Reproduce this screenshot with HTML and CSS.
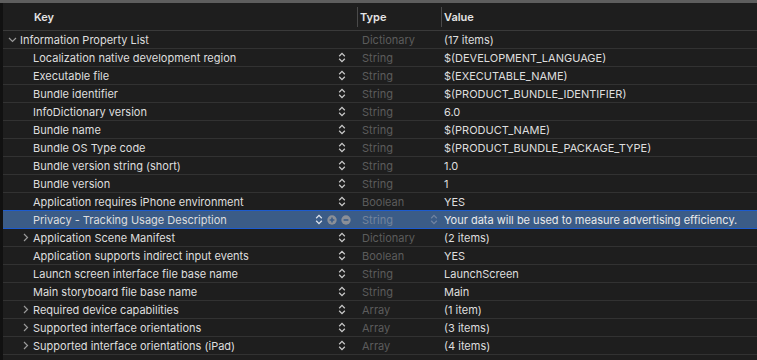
FILE: index.html
```html
<!DOCTYPE html>
<html>
<head>
<meta charset="utf-8">
<link rel="stylesheet" href="styles.css">
</head>
<body>
<div class="window">
  <div class="topstrip"></div>
  <div class="table">
    <div class="head">
      <div class="hkey">Key</div>
      <div class="htype">Type</div>
      <div class="hval">Value</div>
    </div>

    <div class="row">
      <div class="key root"><svg class="chev" width="9" height="6" viewBox="0 0 9 6"><path d="M1 1 L4.5 4.5 L8 1"/></svg><span>Information Property List</span></div>
      <div class="type">Dictionary</div>
      <div class="val">(17 items)</div>
    </div>

    <div class="row">
      <div class="key"><span class="lbl">Localization native development region</span><svg class="step" width="8" height="11" viewBox="0 0 8 11"><path d="M1.2 4.2 L4 1.4 L6.8 4.2 M1.2 6.8 L4 9.6 L6.8 6.8"/></svg></div>
      <div class="type">String</div>
      <div class="val">$(DEVELOPMENT_LANGUAGE)</div>
    </div>
    <div class="row">
      <div class="key"><span class="lbl">Executable file</span><svg class="step" width="8" height="11" viewBox="0 0 8 11"><path d="M1.2 4.2 L4 1.4 L6.8 4.2 M1.2 6.8 L4 9.6 L6.8 6.8"/></svg></div>
      <div class="type">String</div>
      <div class="val">$(EXECUTABLE_NAME)</div>
    </div>
    <div class="row">
      <div class="key"><span class="lbl">Bundle identifier</span><svg class="step" width="8" height="11" viewBox="0 0 8 11"><path d="M1.2 4.2 L4 1.4 L6.8 4.2 M1.2 6.8 L4 9.6 L6.8 6.8"/></svg></div>
      <div class="type">String</div>
      <div class="val">$(PRODUCT_BUNDLE_IDENTIFIER)</div>
    </div>
    <div class="row">
      <div class="key"><span class="lbl">InfoDictionary version</span><svg class="step" width="8" height="11" viewBox="0 0 8 11"><path d="M1.2 4.2 L4 1.4 L6.8 4.2 M1.2 6.8 L4 9.6 L6.8 6.8"/></svg></div>
      <div class="type">String</div>
      <div class="val">6.0</div>
    </div>
    <div class="row">
      <div class="key"><span class="lbl">Bundle name</span><svg class="step" width="8" height="11" viewBox="0 0 8 11"><path d="M1.2 4.2 L4 1.4 L6.8 4.2 M1.2 6.8 L4 9.6 L6.8 6.8"/></svg></div>
      <div class="type">String</div>
      <div class="val">$(PRODUCT_NAME)</div>
    </div>
    <div class="row">
      <div class="key"><span class="lbl">Bundle OS Type code</span><svg class="step" width="8" height="11" viewBox="0 0 8 11"><path d="M1.2 4.2 L4 1.4 L6.8 4.2 M1.2 6.8 L4 9.6 L6.8 6.8"/></svg></div>
      <div class="type">String</div>
      <div class="val">$(PRODUCT_BUNDLE_PACKAGE_TYPE)</div>
    </div>
    <div class="row">
      <div class="key"><span class="lbl">Bundle version string (short)</span><svg class="step" width="8" height="11" viewBox="0 0 8 11"><path d="M1.2 4.2 L4 1.4 L6.8 4.2 M1.2 6.8 L4 9.6 L6.8 6.8"/></svg></div>
      <div class="type">String</div>
      <div class="val">1.0</div>
    </div>
    <div class="row">
      <div class="key"><span class="lbl">Bundle version</span><svg class="step" width="8" height="11" viewBox="0 0 8 11"><path d="M1.2 4.2 L4 1.4 L6.8 4.2 M1.2 6.8 L4 9.6 L6.8 6.8"/></svg></div>
      <div class="type">String</div>
      <div class="val">1</div>
    </div>
    <div class="row">
      <div class="key"><span class="lbl">Application requires iPhone environment</span><svg class="step" width="8" height="11" viewBox="0 0 8 11"><path d="M1.2 4.2 L4 1.4 L6.8 4.2 M1.2 6.8 L4 9.6 L6.8 6.8"/></svg></div>
      <div class="type">Boolean</div>
      <div class="val">YES</div>
    </div>
    <div class="row selected">
      <div class="key"><span class="lbl">Privacy - Tracking Usage Description</span>
        <svg class="step" width="8" height="11" viewBox="0 0 8 11"><path d="M1.2 4.2 L4 1.4 L6.8 4.2 M1.2 6.8 L4 9.6 L6.8 6.8"/></svg>
        <svg class="circ" width="10" height="10" viewBox="0 0 10 10"><circle cx="5" cy="5" r="4.7"/><path d="M5 2.6 V7.4 M2.6 5 H7.4"/></svg>
        <svg class="circ last" width="10" height="10" viewBox="0 0 10 10"><circle cx="5" cy="5" r="4.7"/><path d="M2.6 5 H7.4"/></svg>
      </div>
      <div class="type"><span>String</span><svg class="step faint" width="8" height="11" viewBox="0 0 8 11"><path d="M1.2 4.2 L4 1.4 L6.8 4.2 M1.2 6.8 L4 9.6 L6.8 6.8"/></svg></div>
      <div class="val">Your data will be used to measure advertising efficiency.</div>
    </div>
    <div class="row">
      <div class="key"><svg class="rchev" width="6" height="9" viewBox="0 0 6 9"><path d="M1 1 L4.5 4.5 L1 8"/></svg><span class="lbl">Application Scene Manifest</span><svg class="step" width="8" height="11" viewBox="0 0 8 11"><path d="M1.2 4.2 L4 1.4 L6.8 4.2 M1.2 6.8 L4 9.6 L6.8 6.8"/></svg></div>
      <div class="type">Dictionary</div>
      <div class="val">(2 items)</div>
    </div>
    <div class="row">
      <div class="key"><span class="lbl">Application supports indirect input events</span><svg class="step" width="8" height="11" viewBox="0 0 8 11"><path d="M1.2 4.2 L4 1.4 L6.8 4.2 M1.2 6.8 L4 9.6 L6.8 6.8"/></svg></div>
      <div class="type">Boolean</div>
      <div class="val">YES</div>
    </div>
    <div class="row">
      <div class="key"><span class="lbl">Launch screen interface file base name</span><svg class="step" width="8" height="11" viewBox="0 0 8 11"><path d="M1.2 4.2 L4 1.4 L6.8 4.2 M1.2 6.8 L4 9.6 L6.8 6.8"/></svg></div>
      <div class="type">String</div>
      <div class="val">LaunchScreen</div>
    </div>
    <div class="row">
      <div class="key"><span class="lbl">Main storyboard file base name</span><svg class="step" width="8" height="11" viewBox="0 0 8 11"><path d="M1.2 4.2 L4 1.4 L6.8 4.2 M1.2 6.8 L4 9.6 L6.8 6.8"/></svg></div>
      <div class="type">String</div>
      <div class="val">Main</div>
    </div>
    <div class="row">
      <div class="key"><svg class="rchev" width="6" height="9" viewBox="0 0 6 9"><path d="M1 1 L4.5 4.5 L1 8"/></svg><span class="lbl">Required device capabilities</span><svg class="step" width="8" height="11" viewBox="0 0 8 11"><path d="M1.2 4.2 L4 1.4 L6.8 4.2 M1.2 6.8 L4 9.6 L6.8 6.8"/></svg></div>
      <div class="type">Array</div>
      <div class="val">(1 item)</div>
    </div>
    <div class="row">
      <div class="key"><svg class="rchev" width="6" height="9" viewBox="0 0 6 9"><path d="M1 1 L4.5 4.5 L1 8"/></svg><span class="lbl">Supported interface orientations</span><svg class="step" width="8" height="11" viewBox="0 0 8 11"><path d="M1.2 4.2 L4 1.4 L6.8 4.2 M1.2 6.8 L4 9.6 L6.8 6.8"/></svg></div>
      <div class="type">Array</div>
      <div class="val">(3 items)</div>
    </div>
    <div class="row">
      <div class="key"><svg class="rchev" width="6" height="9" viewBox="0 0 6 9"><path d="M1 1 L4.5 4.5 L1 8"/></svg><span class="lbl">Supported interface orientations (iPad)</span><svg class="step" width="8" height="11" viewBox="0 0 8 11"><path d="M1.2 4.2 L4 1.4 L6.8 4.2 M1.2 6.8 L4 9.6 L6.8 6.8"/></svg></div>
      <div class="type">Array</div>
      <div class="val">(4 items)</div>
    </div>
  </div>
</div>
</body>
</html>
```

FILE: styles.css
```css
* { box-sizing: border-box; }
html, body {
  margin: 0;
  padding: 0;
  background: #1e1e1e;
}
body {
  font-family: Inter, "Liberation Sans", Arial, sans-serif;
  font-size: 11px;
  color: #dedede;
  width: 757px;
  height: 360px;
  overflow: hidden;
}
.window {
  height: 360px;
  display: flex;
  flex-direction: column;
}
.topstrip {
  height: 3px;
  background: #5e5e5e;
  flex: none;
}
.table {
  flex: 1;
  border-left: 3px solid #111;
}
.head {
  height: 28px;
  display: grid;
  grid-template-columns: 354px 84px 1fr;
  border-bottom: 1px solid #3a3a3a;
  font-weight: 600;
  color: #e4e4e4;
  align-items: center;
}
.hkey { padding-left: 31px; }
.htype, .hval {
  border-left: 1px solid #4a4a4a;
  padding-left: 2px;
  height: 20px;
  line-height: 20px;
}
.row {
  height: 18px;
  display: grid;
  grid-template-columns: 354px 84px 1fr;
  border-bottom: 1px solid #323232;
  align-items: center;
}
.key {
  display: flex;
  align-items: center;
  height: 17px;
  padding-left: 30px;
  padding-right: 11px;
}
.key.root { padding-left: 5px; }
.chev {
  fill: none;
  stroke: #9a9a9a;
  stroke-width: 1.2;
  margin-right: 3px;
}
.rchev {
  fill: none;
  stroke: #9a9a9a;
  stroke-width: 1.2;
  margin-left: -10px;
  margin-right: 4px;
}
.lbl { flex: 1; white-space: nowrap; }
.step {
  fill: none;
  stroke: #c8c8c8;
  stroke-width: 1.3;
  flex: none;
}
.type {
  color: #5c5c5c;
  padding-left: 5px;
  display: flex;
  align-items: center;
  height: 17px;
}
.type span { flex: 1; }
.val {
  padding-left: 3px;
  white-space: nowrap;
  color: #dedede;
}
.selected {
  background: #3b5c87;
  border-top: 1px solid #1c5bd0;
  border-bottom: 1px solid #1c5bd0;
  margin-top: -1px;
  height: 19px;
}
.selected .key { padding-right: 6px; }
.selected .type { color: #73849c; padding-right: 3px; }
.selected .val { color: #eaeaea; }
.selected .step { stroke: #dde3ec; margin-right: 4px; }
.selected .step.faint { stroke: #6f82a0; margin-right: 0; }
.circ { flex: none; margin-right: 4px; }
.circ.last { margin-right: 0; }
.circ circle { fill: #8a8f97; }
.circ path { stroke: #3b5c87; stroke-width: 1.6; fill: none; }
```
